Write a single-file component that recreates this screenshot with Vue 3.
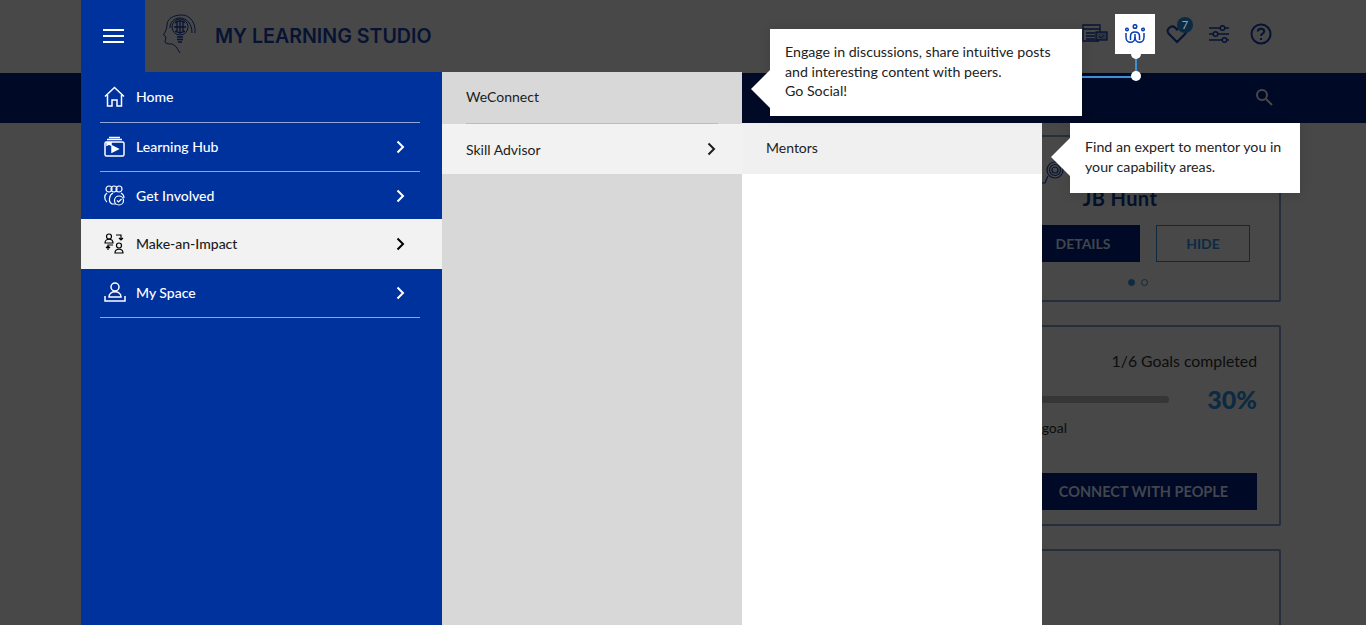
<template>
<div class="page">
  <header class="top">
    <div class="brand">
      <svg class="logo" width="34" height="40" viewBox="0 0 34 40" fill="none" stroke="#061333" stroke-width="1">
        <path d="M32 19C33 9 27 1 19 1 10 1 4 5 4 11 4 14 3 17 .5 21L3 23 2 28C4 31 9 29 11 31 14 33 15 36 17 39"/>
        <path d="M29 19C29 10 24 4 17 4 11 4 7 8 7 14"/>
        <circle cx="17" cy="13" r="8"/>
        <path d="M12 9c3-3 8-3 10 0M11 13h12M12 17c3 2 7 2 10 0M17 6v14M14 8v10M20 8v10" stroke-width="1.300"/>
        <path d="M14 23h6M14 25.500h6M15 28h4" stroke-width="1.500"/>
      </svg>
      <span class="title">MY LEARNING STUDIO</span>
    </div>
    <div class="tools">
      <svg width="26" height="20" viewBox="0 0 26 20" fill="none" stroke="#061333" stroke-width="1.300">
        <path d="M17 17H1V1h17v7M1 5h17M4 9h9M4 12h9M4 15h9"/>
        <rect x="14" y="8" width="11" height="8" fill="#061333" fill-opacity=".4"/>
        <path d="M17 12l2 2 3-3" stroke-width="1"/>
      </svg>
      <span class="tool-space"></span>
      <span class="heart">
        <svg width="22" height="20" viewBox="0 0 22 20" fill="none" stroke="#061333" stroke-width="2">
          <path d="M11 18 2.500 9.500C-.5 5 5.500 .5 9 3.500L11 5.500 13 3.500C17 .5 22.500 5 19.500 9.500Z"/>
        </svg>
        <span class="badge">7</span>
      </span>
      <svg width="22" height="18" viewBox="0 0 22 18" fill="none" stroke="#061333" stroke-width="1.500">
        <path d="M1 3h11M17 3h4M1 9h4M10 9h11M1 15h13M19 15h2"/>
        <circle cx="14.500" cy="3" r="2.300"/><circle cx="7.500" cy="9" r="2.300"/><circle cx="16.500" cy="15" r="2.300"/>
      </svg>
      <svg width="22" height="22" viewBox="0 0 22 22" fill="none" stroke="#061333" stroke-width="2">
        <circle cx="11" cy="11" r="9.500"/>
        <path d="M7.800 8.500C8 4.800 14.200 4.800 14.200 8.500 14.200 10.500 11 10.800 11 13"/>
        <path d="M11 15v2"/>
      </svg>
    </div>
  </header>
  <nav class="bar">
    <svg width="18" height="18" viewBox="0 0 18 18" fill="none" stroke="#484848" stroke-width="2">
      <circle cx="7" cy="7" r="5"/><path d="M11 11l6 6"/>
    </svg>
  </nav>
  <main class="cards">
    <section class="card mentor">
      <svg class="spiral" width="24" height="26" viewBox="0 0 24 26" fill="none" stroke="#061333" stroke-width="1.200">
        <circle cx="14" cy="10" r="8"/><circle cx="14" cy="10" r="5.500"/><circle cx="14" cy="10" r="3"/>
        <path d="M7 16 4 23 1 23"/>
      </svg>
      <h2>JB Hunt</h2>
      <div class="btns">
        <button class="solid details">DETAILS</button>
        <button class="outline">HIDE</button>
      </div>
      <div class="dots"><i class="on"></i><i></i></div>
    </section>
    <section class="card goals">
      <div class="count">1/6 Goals completed</div>
      <div class="progress">
        <div class="track"></div>
        <b>30%</b>
      </div>
      <div class="next">Your next goal</div>
      <button class="solid connect">CONNECT WITH PEOPLE</button>
    </section>
    <section class="card empty"></section>
  </main>

  <div class="menu">
    <div class="burger"><i></i><i></i><i></i></div>
    <div class="panels">
      <ul class="lvl1">
        <li v-for="item in mainItems" :key="item.label" :class="{ active: item.active }">
          <span class="ico" v-html="item.icon"></span>
          <span>{{ item.label }}</span>
          <svg v-if="item.more" class="chev" width="9" height="14" viewBox="0 0 9 14" fill="none" stroke="currentColor" stroke-width="2"><path d="M1.500 1.500 7 7 1.500 12.500"/></svg>
        </li>
      </ul>
      <ul class="lvl2">
        <li class="we">WeConnect</li>
        <li class="skill">Skill Advisor
          <svg class="chev" width="9" height="14" viewBox="0 0 9 14" fill="none" stroke="currentColor" stroke-width="2"><path d="M1.500 1.500 7 7 1.500 12.500"/></svg>
        </li>
      </ul>
      <div class="lvl3">
        <div class="mentors">Mentors</div>
      </div>
    </div>
  </div>

  <div class="hilite">
    <svg width="20" height="20" viewBox="0 0 20 20" fill="none" stroke="#0a3fb0" stroke-width="1.500">
      <circle cx="10" cy="2.500" r="1.800"/><circle cx="2" cy="5.500" r="1.300"/><circle cx="18" cy="5.500" r="1.300"/>
      <path d="M1 9v4c0 7 9 7 9 0V10"/>
      <path d="M10 13c0 7 9 7 9 0V9"/>
      <path d="M5.500 16V12c0-5.500 9-5.500 9 0v4"/>
    </svg>
  </div>
  <div class="line-v"></div>
  <div class="line-h"></div>
  <div class="knob small"></div>
  <div class="knob"></div>

  <div class="tip social">Engage in discussions, share intuitive posts<br>and interesting content with peers.<br>Go Social!</div>
  <div class="tip expert">Find an expert to mentor you in<br>your capability areas.</div>
</div>
</template>
<script setup>
const stroke = 'fill="none" stroke="currentColor" stroke-width="1.500"'
const mainItems = [
  {
    label: "Home",
    icon: `<svg width="21" height="21" viewBox="0 0 21 21" ${stroke}><path d="M1 10.500 10.500 1.500 20 10.500M3.500 9v11H8v-6h5v6h4.500V9"/></svg>`
  },
  {
    label: "Learning Hub", more: true,
    icon: `<svg width="21" height="21" viewBox="0 0 21 21" ${stroke}><path d="M5 1.500h11M3 3.500h15"/><rect x="1" y="6" width="19" height="14" rx="1.500"/><path d="M8 10l6 3-6 3z" fill="currentColor"/><path d="M3 6l0 3 2-1 2 1V6" fill="currentColor"/></svg>`
  },
  {
    label: "Get Involved", more: true,
    icon: `<svg width="21" height="21" viewBox="0 0 21 21" fill="none" stroke="currentColor" stroke-width="1.200"><circle cx="5" cy="4" r="3"/><circle cx="10" cy="4" r="3"/><circle cx="15" cy="4" r="3"/><path d="M3 8C0 10 0 15 3 17M9 8C5 10 4 17 8 19H12M17 8c2 1 3 3 3 5"/><circle cx="15" cy="15.500" r="4.500"/><path d="M13 15.500l1.500 1.500 3-3"/></svg>`
  },
  {
    label: "Make-an-Impact", more: true, active: true,
    icon: `<svg width="21" height="21" viewBox="0 0 21 21" fill="none" stroke="currentColor" stroke-width="1.200"><circle cx="5" cy="3.500" r="2.500"/><path d="M1 10c0-5 8-5 8 0zM12 2h5v5M15 5l2 2 2-2M9 12H4v5M2 15l2-2 2 2"/><circle cx="15" cy="12.500" r="2.500"/><path d="M11 20c0-5 8-5 8 0z"/></svg>`
  },
  {
    label: "My Space", more: true,
    icon: `<svg width="22" height="21" viewBox="0 0 22 21" ${stroke}><circle cx="11" cy="5" r="4"/><path d="M5 15c0-7 12-7 12 0zM1 14v5h20v-5"/></svg>`
  }
]
</script>
<style scoped>
.page {
  position: relative;
  width: 1366px;
  height: 625px;
  overflow: hidden;
  background: #484848;
  font-family: Lato, "Noto Sans", sans-serif;
  color: #0d0d0d;
}
.top {
  height: 73px;
  display: flex;
  align-items: center;
  justify-content: space-between;
  padding: 0 94px 0 163px;
}
.brand {
  display: flex;
  align-items: center;
  gap: 18px;
  margin-top: -2px;
}
.title {
  font-family: Inter, sans-serif;
  font-size: 19.600px;
  font-weight: 600;
  color: #061333;
}
.logo {
  margin-top: -3px;
}
.tools {
  display: flex;
  align-items: center;
  gap: 20px;
  margin-top: -6px;
}
.tool-space {
  width: 18px;
}
.heart {
  position: relative;
  display: flex;
}
.badge {
  position: absolute;
  left: 11px;
  top: -7px;
  width: 16px;
  height: 16px;
  border-radius: 50%;
  background: #0c2a42;
  color: #9aa3ad;
  font-size: 11px;
  line-height: 16px;
  text-align: center;
}
.bar {
  height: 50px;
  box-sizing: border-box;
  background: #000a26;
  display: flex;
  align-items: center;
  justify-content: flex-end;
  padding: 0 93px 2px 0;
}
.cards {
  display: flex;
  flex-direction: column;
  gap: 23px;
  width: 322px;
  margin: 12px 85px 0 auto;
}
.card {
  border: 2px solid #282d3e;
  border-radius: 2px;
  box-sizing: border-box;
}
.mentor {
  height: 167px;
  display: flex;
  flex-direction: column;
  align-items: center;
}
.spiral {
  margin-top: 23px;
  margin-left: -134px;
}
h2 {
  margin: 0;
  font-size: 20px;
  line-height: 24px;
  font-weight: 700;
  color: #05102a;
  letter-spacing: .4px;
}
.btns {
  display: flex;
  gap: 16px;
  margin-top: 15px;
}
button {
  font-family: inherit;
  font-size: 14px;
  font-weight: 700;
  height: 37px;
  box-sizing: border-box;
  padding: 0;
}
.solid {
  background: #000a26;
  border: none;
  color: #42464f;
}
.details {
  width: 150px;
  padding-left: 36px;
}
.outline {
  width: 94px;
  background: none;
  border: 1px solid #0c2a42;
  color: #0c2a42;
}
.dots {
  display: flex;
  gap: 6px;
  margin: 17px 0 0 36px;
}
.dots i {
  width: 7px;
  height: 7px;
  box-sizing: border-box;
  border-radius: 50%;
  border: 1px solid #0c2a42;
}
.dots i.on {
  background: #0c2a42;
}
.goals {
  height: 201px;
  padding: 24px 22px 0;
  display: flex;
  flex-direction: column;
}
.count {
  text-align: right;
  font-size: 15.800px;
  line-height: 20px;
  color: #0d0d0d;
}
.progress {
  display: flex;
  align-items: center;
  gap: 38px;
  margin-top: 14px;
}
.track {
  flex: 1;
  height: 7px;
  border-radius: 4px;
  background: #363636;
}
.progress b {
  font-size: 25px;
  line-height: 28px;
  font-weight: 900;
  color: #0c2a42;
}
.next {
  width: 84px;
  text-align: right;
  white-space: nowrap;
  direction: rtl;
  font-size: 14px;
  line-height: 18px;
  margin-top: 6px;
}
.connect {
  height: 37px;
  margin-top: 36px;
  margin-left: auto;
  width: 227px;
  font-size: 14.500px;
  padding-left: 0;
}
.empty {
  height: 200px;
}
.menu {
  position: absolute;
  left: 81px;
  top: 0;
  width: 961px;
  height: 625px;
  display: flex;
  flex-direction: column;
}
.burger {
  width: 64px;
  height: 72px;
  background: #00329e;
  display: flex;
  flex-direction: column;
  justify-content: center;
  align-items: center;
  gap: 4px;
}
.burger i {
  width: 21px;
  height: 2px;
  background: #fff;
}
.panels {
  flex: 1;
  display: flex;
  align-items: stretch;
}
ul {
  list-style: none;
  margin: 0;
  padding: 0;
}
.lvl1 {
  width: 361px;
  background: #00329e;
  color: #fff;
  font-size: 14px;
  font-weight: 500;
}
.lvl1 li {
  position: relative;
  height: 49px;
  display: flex;
  align-items: center;
  gap: 10px;
  padding: 0 37px 2px 23px;
  box-sizing: border-box;
}
.lvl1 li::after {
  content: "";
  position: absolute;
  left: 19px;
  right: 22px;
  bottom: 0;
  height: 1px;
  background: #8fa6d8;
}
.lvl1 li:nth-child(1) {
  height: 51px;
}
.lvl1 li:nth-child(3) {
  height: 47px;
  padding-bottom: 0;
}
.lvl1 li:nth-child(3)::after,
.lvl1 li.active::after {
  display: none;
}
.lvl1 li.active {
  height: 50px;
  padding-bottom: 1px;
  background: #f2f2f2;
  color: #1c1c1c;
}
.lvl1 li.active .ico,
.lvl1 li.active .chev {
  color: #000;
}
.ico {
  display: flex;
  width: 22px;
}
.chev {
  margin-left: auto;
}
.lvl2 {
  width: 300px;
  background: #d8d8d8;
  font-size: 14px;
  color: #1c1c1c;
}
.lvl2 li {
  display: flex;
  align-items: center;
  padding: 0 26px 0 24px;
  box-sizing: border-box;
}
.we {
  height: 52px;
  position: relative;
  padding-bottom: 4px !important;
}
.we::after {
  content: "";
  position: absolute;
  left: 24px;
  right: 24px;
  bottom: 0;
  height: 1px;
  background: #bdbdbd;
}
.skill {
  height: 50px;
  background: #f2f2f2;
}
.lvl3 {
  width: 300px;
  margin-top: 51px;
  background: #fff;
}
.mentors {
  height: 51px;
  padding: 0 24px 2px;
  display: flex;
  align-items: center;
  box-sizing: border-box;
  background: #f0f0f0;
  font-size: 14px;
  color: #222;
}
.hilite {
  position: absolute;
  left: 1115px;
  top: 14px;
  width: 40px;
  height: 40px;
  background: #fff;
  display: flex;
  align-items: center;
  justify-content: center;
}
.line-v {
  position: absolute;
  left: 1135px;
  top: 54px;
  width: 2px;
  height: 22px;
  background: #3f8fd6;
}
.line-h {
  position: absolute;
  left: 1082px;
  top: 76px;
  width: 54px;
  height: 2px;
  background: #3f8fd6;
}
.knob {
  position: absolute;
  left: 1131px;
  top: 71px;
  width: 10px;
  height: 10px;
  border-radius: 50%;
  background: #fff;
}
.knob.small {
  top: 49px;
}
.tip {
  position: absolute;
  box-sizing: border-box;
  background: #fff;
  font-size: 14.200px;
  line-height: 19.500px;
  color: #222;
  box-shadow: 0 0 12px rgba(0, 0, 0, .12);
}
.tip::before {
  content: "";
  position: absolute;
  right: 100%;
  border-style: solid;
  border-color: transparent #fff transparent transparent;
  border-width: 19px 19px 19px 0;
}
.social {
  left: 770px;
  top: 29px;
  width: 312px;
  height: 87px;
  padding: 13px 15px;
}
.social::before {
  top: 41px;
}
.expert {
  left: 1070px;
  top: 123px;
  width: 230px;
  height: 70px;
  padding: 14px 15px;
}
.expert::before {
  top: 15px;
}
</style>
<style>
html, body {
  margin: 0;
  overflow: hidden;
}
</style>
